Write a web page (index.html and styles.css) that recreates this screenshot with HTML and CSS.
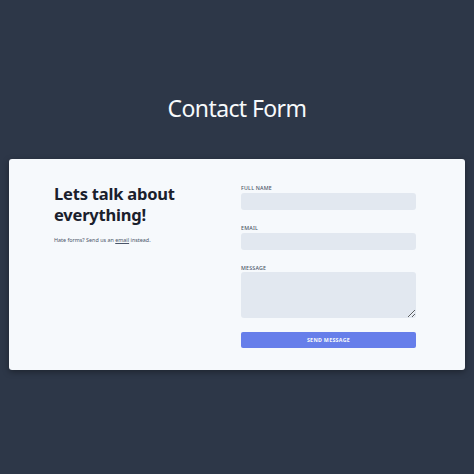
FILE: index.html
```html
<!DOCTYPE html>
<html>
<head>
<meta charset="utf-8">
<link rel="stylesheet" href="styles.css">
</head>
<body>
<main class="page">
  <h1 class="title">Contact Form</h1>
  <section class="card">
    <div class="intro">
      <h2 class="intro-heading">Lets talk about everything!</h2>
      <p class="intro-text">Hate forms? Send us an <a class="link" href="#">email</a> instead.</p>
    </div>
    <form class="form">
      <div class="field">
        <label class="label">FULL NAME</label>
        <input class="input" type="text">
      </div>
      <div class="field">
        <label class="label">EMAIL</label>
        <input class="input" type="text">
      </div>
      <div class="field">
        <label class="label">MESSAGE</label>
        <textarea class="input textarea"></textarea>
      </div>
      <button class="button" type="button">SEND MESSAGE</button>
    </form>
  </section>
</main>
</body>
</html>
```
FILE: styles.css
```css
html, body {
  margin: 0;
  padding: 0;
  height: 100%;
}
body {
  background: #2d3748;
  font-family: "Noto Sans", "Open Sans", sans-serif;
}
.page {
  padding: 93px 9px 0 9px;
}
.title {
  margin: 0 0 35px 0;
  text-align: center;
  color: #f7fafc;
  font-weight: 400;
  font-size: 23px;
  letter-spacing: -0.6px;
  line-height: 31px;
}
.card {
  background: #f6f9fc;
  border-radius: 3px;
  box-shadow: 0 2px 6px rgba(0,0,0,0.35);
  display: grid;
  grid-template-columns: 175px 175px;
  column-gap: 12px;
  padding: 25px 46px 22px 45px;
}
.intro-heading {
  margin: -1px 0 0 0;
  color: #1a202c;
  font-size: 16.5px;
  line-height: 21px;
  font-weight: 700;
  letter-spacing: -0.2px;
}
.intro-text {
  margin: 11px 0 0 0;
  font-size: 5.4px;
  color: #4a5568;
}
.link {
  color: #4a5568;
  text-decoration: underline;
}
.form {
  display: flex;
  flex-direction: column;
}
.field {
  display: flex;
  flex-direction: column;
  margin-bottom: 14px;
}
.label {
  font-size: 5.3px;
  line-height: 8px;
  font-weight: 500;
  color: #4a5568;
  letter-spacing: 0.2px;
  margin-bottom: 1px;
}
.input {
  height: 17px;
  border: none;
  border-radius: 3px;
  background: #e2e8f0;
  padding: 0;
  margin: 0;
  box-sizing: border-box;
}
.textarea {
  height: 46px;
  margin-top: -1px;
  resize: vertical;
}
.button {
  margin-top: 0;
  height: 16px;
  border: none;
  border-radius: 2px;
  background: #667eea;
  color: #f7fafc;
  font-family: "Noto Sans", sans-serif;
  font-size: 5.3px;
  font-weight: 700;
  letter-spacing: 0.3px;
  padding: 0;
}
```
